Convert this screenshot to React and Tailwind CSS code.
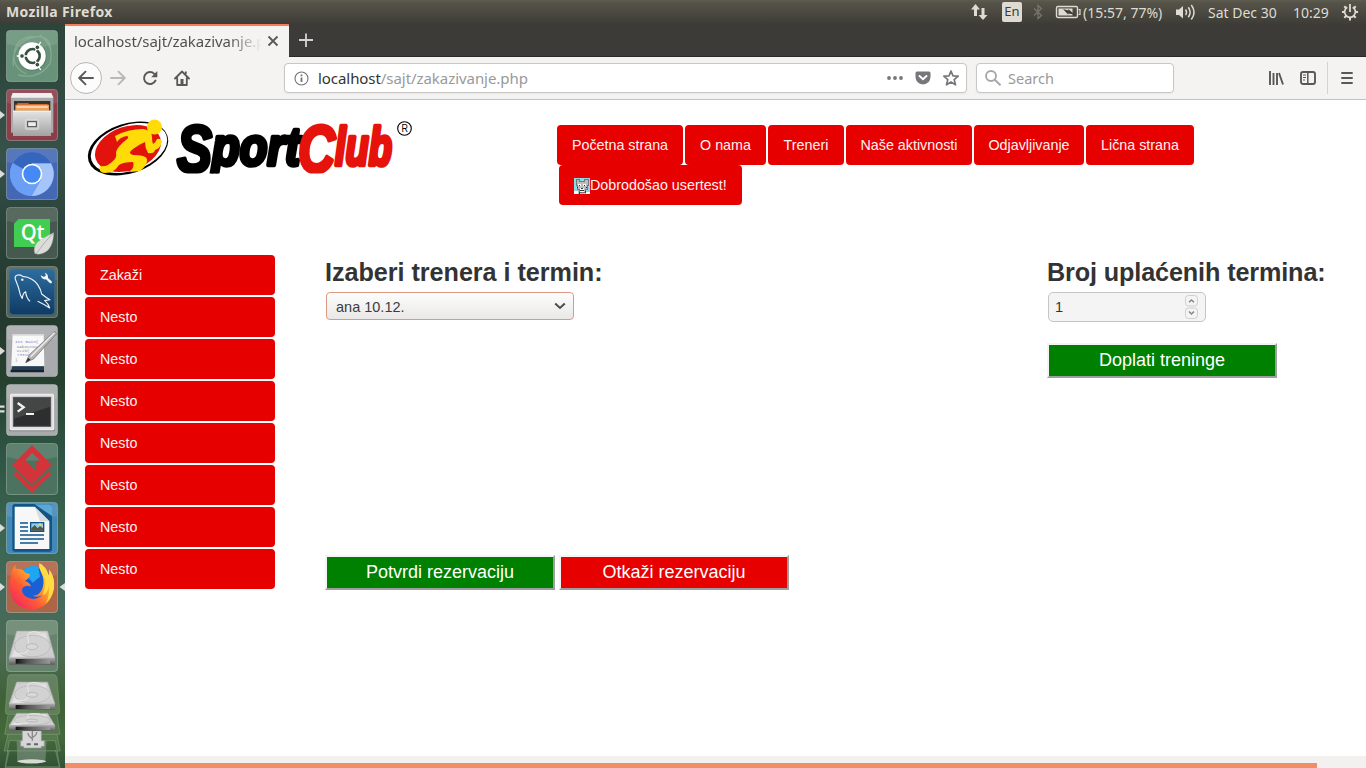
import React from "react";

const UI = "font-['Noto_Sans','Open_Sans',sans-serif]";

function Tile({ box, tone, left, right, children }) {
  const [x, y] = box;
  return (
    <div className="flex h-[52px] w-[65px] items-center">
      <svg className="h-3 w-[6px]" viewBox="0 0 6 12" fill="#dcdcdc">
        {left === "arrow" && <path d="M0 2 L5 6 L0 10Z" />}
        {left === "bars" && <path d="M0 1.500h4.500v2.200H0z M0 6.300h4.500v2.200H0z" />}
      </svg>
      <svg className="h-[52px] w-[52px]" viewBox={`${x} ${y} 156 156`}>
        <rect x={x + 1.5} y={y + 1.5} width="153" height="153" rx="10" fill={tone} stroke="#fff" strokeOpacity=".28" strokeWidth="3" />
        <path d={`M${x + 3} ${y + 12}q0 -9 9 -9h132q9 0 9 9v30q-75 22 -150 0z`} fill="#fff" opacity=".1" />
        {children}
      </svg>
      <svg className="h-3 w-[7px]" viewBox="0 0 7 12" fill="#dcdcdc">
        {right && <path d="M7 2 L1.500 6 L7 10Z" />}
      </svg>
    </div>
  );
}

function Drive({ top, mid, bottom }) {
  const h = mid - top;
  return (
    <g>
      <path d={`M50 ${top}H143L165 ${mid}H27Z`} fill="#cfcfcf" stroke="#a4a4a4" strokeWidth="2" />
      <path d={`M57 ${top + h * 0.06}H136L157 ${mid - h * 0.05}H36Z`} fill="url(#metal)" />
      <ellipse cx="97" cy={top + h * 0.56} rx="54" ry={h * 0.4} fill="#d2d2d2" stroke="#b2b2b2" strokeWidth="2" />
      <path d={`M50 ${top + h * 0.85}Q98 ${top + h * 0.9} 85 ${top + h * 0.4}T120 ${top + h * 0.06}`} fill="none" stroke="#e8e8e8" strokeWidth="3" />
      <ellipse cx="96" cy={top + h * 0.58} rx="17" ry={h * 0.11} fill="#d8d8d8" stroke="#aaa" strokeWidth="2" />
      <path d={`M27 ${mid}H165V${bottom}H27Z`} fill="url(#edge)" />
      <path d={`M47 ${mid + 3}H150V${bottom - 3}H47Z`} fill="url(#slot)" />
    </g>
  );
}

function Launcher() {
  return (
    <aside className="flex w-[65px] shrink-0 flex-col gap-[7px] bg-[linear-gradient(180deg,#2c4439_0%,#37524a_18%,#2b453c_26%,#24382e_38%,#26402f_48%,#2f5544_58%,#3a6550_68%,#456a5c_78%,#4c6b50_85%,#3e6136_91%,#43693a_96%,#315234_100%)] pt-[6px]">
      <svg className="absolute h-0 w-0">
        <defs>
          <linearGradient id="metal" x2="1" y2="1"><stop stopColor="#c4c4c4" /><stop offset=".5" stopColor="#e4e4e4" /><stop offset="1" stopColor="#c8c8c8" /></linearGradient>
          <linearGradient id="edge" x2="0" y2="1"><stop stopColor="#aaa" /><stop offset="1" stopColor="#5c5c5c" /></linearGradient>
          <linearGradient id="slot"><stop stopColor="#111" /><stop offset=".35" stopColor="#555" /><stop offset="1" stopColor="#999" /></linearGradient>
          <linearGradient id="grey" x2="0" y2="1"><stop stopColor="#e4e4e4" /><stop offset="1" stopColor="#a2a2a2" /></linearGradient>
          <linearGradient id="navy" x2="0" y2="1"><stop stopColor="#2d6da0" /><stop offset="1" stopColor="#0f3a63" /></linearGradient>
          <linearGradient id="fox" x1="1" y1="0" x2="0" y2="1"><stop stopColor="#fff44f" /><stop offset=".35" stopColor="#ffb52a" /><stop offset=".62" stopColor="#ff5a36" /><stop offset="1" stopColor="#f5156c" /></linearGradient>
        </defs>
      </svg>

      <Tile box={[18, 90]} tone="#689279">
        <path d="M40 200Q34 130 96 112Q150 100 152 150M55 225Q118 240 150 190Q165 140 120 105M42 160Q50 110 100 110M80 222Q40 205 42 165" fill="none" stroke="#9fbea9" strokeWidth="4" opacity=".5" />
        <circle cx="97" cy="170" r="43" fill="#3f664f" opacity=".3" />
        <circle cx="96" cy="168" r="41" fill="#fff" />
        <circle cx="98" cy="168" r="21" fill="none" stroke="#36523f" strokeWidth="8" />
        <path d="M98 168L122 126M98 168L122 210M98 168H50" stroke="#fff" strokeWidth="4" />
        <g fill="#36523f" stroke="#fff" strokeWidth="3"><circle cx="66" cy="168" r="7" /><circle cx="112" cy="142" r="7" /><circle cx="112" cy="194" r="7" /></g>
      </Tile>

      <Tile box={[18, 267]} tone="#8b3d49" left="arrow">
        <path d="M38 279H154L160 293V398H33V293Z" fill="#a9a9a9" />
        <path d="M38 279H154L160 293H33Z" fill="#f0f0f0" />
        <path d="M42 303H151V332H42Z" fill="#37332f" />
        <path d="M52 309H84L88 312H143V320H52Z" fill="#d25d27" />
        <path d="M46 314H147V332H46Z" fill="#f2a051" />
        <path d="M50 319H143V323H50Z" fill="#fff1dc" />
        <path d="M39 332H153V408H39Z" fill="url(#grey)" />
        <path d="M39 332H153V335H39Z" fill="#f5f5f5" />
        <rect x="76" y="358" width="40" height="30" rx="5" fill="#c9c9c9" stroke="#e5e5e5" strokeWidth="2" />
        <rect x="83" y="365" width="26" height="15" fill="#eee" stroke="#444" strokeWidth="3" />
      </Tile>

      <Tile box={[18, 444]} tone="#4468b4" left="arrow">
        <circle cx="96" cy="522" r="66" fill="#6a9df3" />
        <path d="M96 522L39 489A66 66 0 0 1 153 489H96Z" fill="#3565bd" />
        <path d="M96 491H153A66 66 0 0 1 95 588L124 537Z" fill="#a4c4fa" />
        <path d="M39 489L70 540L96 552L124 537L95 588A66 66 0 0 1 39 489Z" fill="#6b9ff6" />
        <circle cx="96" cy="522" r="31" fill="#fff" />
        <circle cx="96" cy="522" r="26" fill="#4489f4" />
      </Tile>

      <Tile box={[18, 51]} tone="#46594e">
        <path d="M56 87H150V157L136 171H42V101Z" fill="#41cd52" />
        <text x="62" y="151" textLength="72" lengthAdjust="spacingAndGlyphs" fill="#fff" className="font-['Open_Sans',sans-serif] text-[64px] font-semibold">Qt</text>
        <path d="M161 128Q160 178 128 190Q112 196 104 190Q99 172 112 157Q125 145 161 128Z" fill="#dcdcda" stroke="#aaa" />
        <path d="M160 129Q130 160 108 192" fill="none" stroke="#9c9c9c" strokeWidth="2" />
      </Tile>

      <Tile box={[18, 228]} tone="#50635b">
        <rect x="28" y="238" width="136" height="136" rx="12" fill="url(#navy)" stroke="#416c8b" strokeWidth="2" />
        <path d="M67 326L61 314Q57 293 46 268Q43 257 54 255Q60 254 68 259Q98 262 113 284Q123 299 125 312Q137 322 150 329L134 332Q146 342 149 354Q130 342 113 334M67 326Q68 309 77 305Q78 322 90 334" fill="none" stroke="#e9f2f8" strokeWidth="3.500" strokeLinejoin="round" />
        <circle cx="67" cy="269" r="3.500" fill="#fff" />
        <path d="M134 248Q145 251 144 264L155 274Q158 280 150 280L138 268Q125 270 122 256L132 261L138 256Z" fill="#f1f6fa" />
      </Tile>

      <Tile box={[18, 405]} tone="#a9aaad" left="arrow">
        <path d="M37 529H132V546H32Z" fill="#243d57" />
        <path d="M32 540H132V547H32Z" fill="#17212d" />
        <path d="M38 432H131L133 528H34Z" fill="#f8f8f8" />
        <path d="M38 432H131V437H38Z" fill="#d7d7d7" />
        <g className="font-['Liberation_Mono',monospace] text-[13px]" fill="#8d93a8"><text x="45" y="460" fill="#7b78d6">int main(</text><text x="50" y="473">KAboutDat</text><text x="50" y="486">KLib(</text><text x="52" y="499" fill="#7b78d6">return</text><text x="45" y="513">}</text></g>
        <path d="M164 424L170 431L102 506L77 518L88 494Z" fill="#b4b4b4" stroke="#6d6d6d" strokeWidth="2" />
        <path d="M163 428L92 500" stroke="#eee" strokeWidth="4" /><path d="M77 518L84 503L92 509Z" fill="#333" />
      </Tile>

      <Tile box={[18, 12]} tone="#a8aaab" left="bars">
        <rect x="28" y="41" width="136" height="113" rx="3" fill="#777" />
        <rect x="30" y="42" width="132" height="108" rx="3" fill="#e2e2e2" stroke="#fff" strokeWidth="2" />
        <rect x="40" y="52" width="112" height="87" fill="#2d2e2f" stroke="#555" strokeWidth="3" />
        <path d="M42 54H150V80L42 116Z" fill="#545657" opacity=".6" />
        <path d="M53 69L71 82L53 95" fill="none" stroke="#f2f2f2" strokeWidth="7" /><path d="M78 102H102" stroke="#f2f2f2" strokeWidth="6" />
      </Tile>

      <Tile box={[18, 189]} tone="#4c7360">
        <path fillRule="evenodd" d="M96 196L156 255L96 314L36 255ZM97 218L75 241L104 270L118 256L104 248L119 241Z" fill="#d23539" />
        <path d="M118 245L130 257L116 271L104 259Z" fill="#d23539" />
        <path d="M40 282L48 274L96 320L146 274L154 282L96 339Z" fill="#d23539" />
      </Tile>

      <Tile box={[18, 366]} tone="#4388b6" left="arrow">
        <rect x="37" y="372" width="119" height="143" rx="8" fill="#115586" />
        <path d="M104 373H148Q156 373 156 382V408Z" fill="#5da7d2" />
        <path d="M44 380H104L148 424V507H44Z" fill="#f7f7f7" />
        <path d="M104 380L148 424H120Z" fill="#d6dde1" />
        <path d="M60 429H84M60 441H84M60 453H84M60 465H132M60 477H132M60 489H114" stroke="#0d568d" strokeWidth="5" />
        <rect x="92" y="428" width="39" height="26" fill="#92cce5" stroke="#0d568d" strokeWidth="4" />
        <path d="M94 452V445L104 435L113 445L120 438L129 445V452Z" fill="#52564b" /><circle cx="120" cy="434" r="4" fill="#f5cf56" />
      </Tile>

      <Tile box={[18, -27]} tone="#ae6446" left="arrow" right>
        <circle cx="97" cy="48" r="56" fill="#1c5fd4" />
        <path d="M67 2Q88-18 115-10L120 20L98 38Z" fill="#1fa5f2" />
        <path d="M118-20Q116-5 124 9Q135 30 128 53Q120 77 98 77Q113 84 128 75Q101 97 75 78Q62 65 68 53Q80 43 93 50Q90 38 75 33Q91 23 89 12Q74 10 70 1Q58-5 48-3Q44-10 47-16Q32-1 32 20Q27 41 30 57Q37 116 97 118Q151 113 162 57Q166 24 148-1Q150 12 146 17Q139-10 118-20Z" fill="url(#fox)" />
        <path d="M118-20Q116-5 128 11Q143 39 128 75Q144 71 146 45Q151 74 137 101Q163 77 162 39Q160 14 148-1Q150 12 146 17Q139-10 118-20Z" fill="#ffdc46" />
      </Tile>

      <Tile box={[18, 151]} tone="#66846d"><Drive top={184} mid={265} bottom={285} /></Tile>

      <svg className="mt-[-5px] h-[94px] w-[65px]" viewBox="0 312 195 282">
        <path d="M30 314H162Q169 314 171 325L179 424Q179 434 168 434H26Q15 434 16 424L23 325Q24 314 30 314Z" fill="#aec5a5" opacity=".3" stroke="#fff" strokeWidth="2" />
        <path d="M24 436L14 493H180L171 436M24 493L12 543H181L171 493M28 540L17 590H178L166 540M28 512H166L180 594H15Z" fill="#c3d4bd" fillOpacity=".15" stroke="#e3eee3" strokeOpacity=".3" strokeWidth="2" />
        <path d="M50 512H140L136 575Q95 590 52 575Z" fill="#809486" opacity=".6" />
        <ellipse cx="95" cy="574" rx="43" ry="6" fill="#d4dbd5" />
        <path d="M67 482H124V512H133V529H124V534H71V529H62V512H67Z" fill="#d6d6d6" stroke="#999" strokeWidth="2" />
        <path d="M97 512V482M97 506Q84 498 84 489M97 502Q110 496 110 486" fill="none" stroke="#888" strokeWidth="4" /><path d="M80 520H92V526H80zM102 520H114V526H102z" fill="#666" />
        <Drive top={336} mid={402} bottom={420} />
        <Drive top={430} mid={467} bottom={483} />
      </svg>
    </aside>
  );
}

function TopPanel() {
  return (
    <header className="flex h-6 items-center bg-[linear-gradient(#5f5d51_0,#565449_10%,#3d3c37_100%)] text-[#dfdbd2]">
      <span className="w-[120px] pl-[6px] text-[14px] leading-6 font-bold whitespace-nowrap tracking-[0.025em]">Mozilla Firefox</span>
      <div className="ml-auto flex h-6 items-center text-[14px]">
        <svg className="h-6 w-[18px]" viewBox="0 0 18 24" fill="#dfdbd2"><path d="M5.500 4L10 9.400H7V16H4V9.400H1ZM13 20L8.500 15H11.500V8H14.500V15H17.500Z" /></svg>
        <span className="ml-[14px] flex h-5 w-5 items-center justify-center rounded-[2px] bg-[#dfdbd2] text-[13px] text-[#3d3c37]">En</span>
        <svg className="ml-[11px] h-6 w-[10px]" viewBox="0 0 10 24" fill="none" stroke="#77756d" strokeWidth="1.300"><path d="M1 8.500L8.500 15.500L5 18.500V5.500L8.500 8.500L1 15.500" /></svg>
        <svg className="ml-[12px] h-6 w-[26px]" viewBox="0 0 26 24"><rect x="1.500" y="6.500" width="21" height="11" rx="1.500" fill="none" stroke="#dfdbd2" strokeWidth="1.400" /><rect x="3.500" y="8.500" width="14" height="7" fill="#dfdbd2" /><path d="M23.500 9.500H25V14.500H23.500" fill="none" stroke="#dfdbd2" strokeWidth="1.200" /><path d="M8 9L13.500 10.500L13.300 9L19.500 14.500L13 13.500L13.500 15Z" fill="#3d3c37" /></svg>
        <span className="ml-[2px] w-[83px] whitespace-nowrap">(15:57, 77%)</span>
        <svg className="ml-[9px] h-6 w-[22px]" viewBox="0 0 22 24" fill="none" stroke="#dfdbd2" strokeWidth="1.500"><path d="M1 9.500H4L8 6V18.500L4 15H1Z" fill="#dfdbd2" stroke="none" /><path d="M10.500 9.500Q12.500 12.300 10.500 15M13.300 7.300Q17 12.300 13.300 17.200M16.300 5Q21.800 12.300 16.300 19.500" /></svg>
        <span className="ml-[11px] w-[73px] whitespace-nowrap">Sat Dec 30</span>
        <span className="ml-[12px] w-[39px] whitespace-nowrap">10:29</span>
        <svg className="mr-[7px] ml-[9px] h-6 w-[18px]" viewBox="0 0 18 24" fill="none" stroke="#dfdbd2"><path d="M6.300 7.200A5.400 5.400 0 1 0 11.700 7.200" strokeWidth="1.700" /><path d="M9 4V12" strokeWidth="1.800" /><path d="M1 12H4M14 12H17M9 17V20.500M3.300 6.300L5.500 8.500M14.700 6.300L12.500 8.500M3.300 17.700L5.300 15.700M14.700 17.700L12.700 15.700" strokeWidth="2" /></svg>
      </div>
    </header>
  );
}

function Browser() {
  return (
    <>
      <div className="flex h-[33px] border-b border-[#2b2926] bg-[#3c3b37]">
        <div className="mb-[-1px] flex w-[224px] border-t-2 border-[#f37e58] bg-[#f4f3f2] pl-[9px] text-[#4c4c4c]">
          <span className="w-[188px] overflow-hidden bg-[linear-gradient(90deg,#4c4c4c_82%,transparent_100%)] bg-clip-text text-[15px] leading-[30px] tracking-[-0.004em] whitespace-nowrap text-transparent">localhost/sajt/zakazivanje.php</span>
          <svg className="ml-[4px] h-[31px] w-4" viewBox="0 0 16 31" stroke="#58575a" strokeWidth="1.800"><path d="M2.500 10.500L11.500 19.500M11.500 10.500L2.500 19.500" /></svg>
        </div>
        <svg className="ml-[9px] h-8 w-4" viewBox="0 0 16 32" stroke="#d5d4d2" strokeWidth="1.800"><path d="M8 9.500V23M1 16H15" /></svg>
      </div>
      <div className="flex h-[43px] items-center border-b border-[#c5c3c1] bg-[#f4f3f2]">
        <span className="ml-[5px] flex h-8 w-8 items-center justify-center rounded-full border border-[#b9b7b5] bg-[#fcfcfc]">
          <svg className="h-4 w-4" viewBox="0 0 16 16" fill="none" stroke="#58575a" strokeWidth="1.900" strokeLinecap="round" strokeLinejoin="round"><path d="M15 8H1.500M7.500 1.700L1.200 8L7.500 14.300" /></svg>
        </span>
        <svg className="ml-2 h-4 w-4" viewBox="0 0 16 16" fill="none" stroke="#b9b8b7" strokeWidth="1.900" strokeLinecap="round" strokeLinejoin="round"><path d="M1 8H14.500M8.500 1.700L14.800 8L8.500 14.300" /></svg>
        <svg className="ml-4 h-4 w-4" viewBox="0 0 16 16" fill="none" stroke="#58575a" strokeWidth="1.900"><path d="M13.500 10.500A6 6 0 1 1 12.300 3.800" strokeLinecap="round" /><path d="M15.300 1V7.200H9.200Z" fill="#58575a" stroke="none" /></svg>
        <svg className="ml-4 h-4 w-4" viewBox="0 0 16 16" fill="none" stroke="#58575a" strokeWidth="1.800" strokeLinejoin="round"><path d="M1 8.500L8 1.500L15 8.500M3.200 8V15H12.800V8" strokeLinecap="round" /><path d="M6.500 9h3v5h-3z" fill="#58575a" stroke="none" /><path d="M11.800 1.500V4" /></svg>
        <div className="ml-[94px] flex h-[30px] w-[683px] items-center rounded-[4px] border border-[#c9c7c5] bg-white shadow-[0_1px_2px_#0000000d]">
          <svg className="ml-[9px] h-[15px] w-[15px]" viewBox="0 0 15 15" fill="none" stroke="#737373" strokeWidth="1.100"><circle cx="7.500" cy="7.500" r="6.500" /><path d="M7.500 6.500V11M7.500 3.500V5.200" strokeWidth="1.800" /></svg>
          <span className="ml-[9px] text-[15px] leading-[28px] tracking-[-0.004em] whitespace-nowrap text-[#333]">localhost<span className="text-[#999]">/sajt/zakazivanje.php</span></span>
          <svg className="ml-auto h-4 w-[18px]" viewBox="0 0 18 16" fill="#77767a"><circle cx="3" cy="8" r="1.900" /><circle cx="9" cy="8" r="1.900" /><circle cx="15" cy="8" r="1.900" /></svg>
          <svg className="ml-[11px] h-4 w-4" viewBox="0 0 16 16"><path d="M2 1.500H14Q15.500 1.500 15.500 3V7Q15 14 8 14.500Q1 14 .5 7V3Q.5 1.500 2 1.500Z" fill="#77767a" /><path d="M4.500 6L8 9.300L11.500 6" fill="none" stroke="#fff" strokeWidth="1.900" strokeLinecap="round" /></svg>
          <svg className="mr-[7px] ml-3 h-4 w-4" viewBox="0 0 16 16" fill="none" stroke="#77767a" strokeWidth="1.700" strokeLinejoin="round"><path d="M8 1L10 5.800L15.200 6.200L11.200 9.600L12.500 14.800L8 12L3.500 14.800L4.800 9.600L.8 6.200L6 5.800Z" /></svg>
        </div>
        <div className="ml-[9px] flex h-[30px] w-[198px] items-center rounded-[4px] border border-[#c9c7c5] bg-white shadow-[0_1px_2px_#0000000d]">
          <svg className="ml-2 h-4 w-4" viewBox="0 0 16 16" fill="none" stroke="#a7a6a8" strokeWidth="1.900"><circle cx="6" cy="6" r="5" /><path d="M9.700 9.700L15.500 15.200" /></svg>
          <span className="ml-[7px] text-[14.500px] leading-[28px] text-[#999]">Search</span>
        </div>
        <svg className="ml-auto h-4 w-4" viewBox="0 0 16 16" stroke="#58575a" strokeWidth="1.900"><path d="M2 1V15M5.500 3V15M9 3V15M11 3L15 14.500" /></svg>
        <svg className="ml-4 h-4 w-4" viewBox="0 0 16 16" fill="none" stroke="#58575a" strokeWidth="1.900"><rect x="1" y="2" width="14" height="12" rx="2" /><path d="M7.800 2V14" strokeWidth="1.500" /><path d="M3 5H6M3 7.500H6M3 10H5" strokeWidth="1" /></svg>
        <span className="ml-[11px] h-8 w-px bg-[#d5d3d2]" />
        <svg className="mr-[11px] ml-[11px] h-4 w-4" viewBox="0 0 16 16" stroke="#58575a" strokeWidth="1.900" strokeLinecap="round"><path d="M3 3H13M3 8H13M3 13H13" /></svg>
      </div>
    </>
  );
}

function Logo() {
  return (
    <svg className="h-[80px] w-[350px]" viewBox="0 0 350 80">
      <defs><clipPath id="word"><path d="M90 5H318V63.500H90Z" /></clipPath></defs>
      <ellipse cx="48" cy="38.500" rx="41.500" ry="25" transform="rotate(-18 48 38.500)" fill="#000" />
      <ellipse cx="49" cy="38" rx="39.500" ry="23" transform="rotate(-18 49 38)" fill="#fff" />
      <ellipse cx="48" cy="38.500" rx="34" ry="22" transform="rotate(-18 48 38.500)" fill="#e2130d" />
      <path d="M35 26Q48 19 63 19Q72 20 72 27Q72 32 73 34Q76 32 77 29Q81 28 82 31Q81 38 75 40Q74 44 68 43Q65 38 65 32Q60 34 53 39Q47 43 53 45Q66 45 67 49Q68 55 60 61L50 62Q55 56 53 52Q43 52 39 55Q34 63 25 63Q18 63 20 56Q27 58 35 49Q37 46 36 42Q38 36 46 30Q50 27 47 26Q40 27 37 32Z" fill="#ffdc08" />
      <circle cx="74.500" cy="17" r="7.600" fill="#ffdc08" />
      <g className="font-['Liberation_Sans',sans-serif] font-bold italic" strokeLinejoin="round" clipPath="url(#word)">
        <g fill="#000" stroke="#000">
          <text x="97" y="61.500" fontSize="67" textLength="35" lengthAdjust="spacingAndGlyphs" strokeWidth="4">S</text>
          <text x="132" y="55" fontSize="54" textLength="88" lengthAdjust="spacingAndGlyphs" strokeWidth="4.500">port</text>
        </g>
        <g fill="#e6130c" stroke="#e6130c">
          <text x="218" y="61.500" fontSize="67" textLength="37" lengthAdjust="spacingAndGlyphs" strokeWidth="4">C</text>
          <text x="255" y="55" fontSize="53" textLength="57" lengthAdjust="spacingAndGlyphs" strokeWidth="4.500">lub</text>
        </g>
      </g>
      <circle cx="324.500" cy="18.500" r="6.800" fill="none" stroke="#000" strokeWidth="1.100" />
      <text x="321.500" y="22.300" className="font-['Liberation_Sans',sans-serif] text-[10px]" textLength="6.500" lengthAdjust="spacingAndGlyphs">R</text>
    </svg>
  );
}

function Avatar() {
  return (
    <svg className="h-4 w-4 shrink-0" viewBox="0 0 16 16" shapeRendering="crispEdges">
      <path d="M0 0H16V16H0Z" fill="#8ed8e4" />
      <path d="M0 13H4V16H0ZM12 14H16V16H12Z" fill="#fff" />
      <path d="M2 1L6 3H10L14 1V8L12 13L9 16H6L3 12Z" fill="#bdbdbd" />
      <path d="M2 1H5V3H10V1H14V7H13V11H11V14H5V11H3V7H2Z" fill="none" stroke="#777" />
      <path d="M4 6h3v2H4zM9 6h3v2H9zM6 10h4v4H6z" fill="#f4f4f4" /><path d="M5 7h1v1H5zM10 7h1v1h-1zM7 10h2v1H7zM6 12h4v1H6zM3 9h1v1H3zM12 9h1v1h-1zM5 14h1v2H5zM11 13h1v2h-1z" fill="#333" />
    </svg>
  );
}

const nav = [
  ["Početna strana", "w-[126px]"],
  ["O nama", "w-[81px]"],
  ["Treneri", "w-[76px]"],
  ["Naše aktivnosti", "w-[126px]"],
  ["Odjavljivanje", "w-[110px]"],
  ["Lična strana", "w-[108px]"],
];

function ActionButton({ tone, children }) {
  return (
    <button className={`h-[35px] w-[230px] border-2 border-t-[#f4f4f4] border-r-[#9e9e9e] border-b-[#9e9e9e] border-l-[#f4f4f4] pb-[2px] text-[18px] leading-none text-white ${tone}`}>{children}</button>
  );
}

function Page() {
  return (
    <div className="flex h-[656px] flex-col bg-white font-['Liberation_Sans',sans-serif] text-[14.300px]">
      <div className="flex h-[155px] shrink-0 pl-[15px]">
        <div className="pt-[10px]"><Logo /></div>
        <nav className="ml-[127px] pt-[25px] text-[#fff4f4]">
          <div className="flex gap-[2px]">
            {nav.map(([label, width]) => (
              <a key={label} className={`flex h-10 items-center justify-center rounded-[4px] bg-[#e60000] pt-[2px] whitespace-nowrap ${width}`}>{label}</a>
            ))}
          </div>
          <a className="ml-[2px] flex h-10 w-[183px] items-center rounded-[4px] bg-[#e60000] pt-[2px] pl-[15px] whitespace-nowrap"><Avatar />Dobrodošao usertest!</a>
        </nav>
      </div>
      <div className="flex pl-5">
        <ul className="flex w-[190px] flex-col gap-[2px] text-[#fff4f4]">
          {["Zakaži", "Nesto", "Nesto", "Nesto", "Nesto", "Nesto", "Nesto", "Nesto"].map((label, i) => (
            <li key={i} className="flex h-10 items-center rounded-[4px] bg-[#e60000] pt-[2px] pl-[15px]">{label}</li>
          ))}
        </ul>
        <section className="ml-[50px] flex w-[722px] flex-col">
          <h2 className="h-[37px] pt-[3px] text-[25.200px] leading-[29px] font-bold tracking-[-0.040px] text-[#333]">Izaberi trenera i termin:</h2>
          <div className="ml-[1px] flex h-[28px] w-[248px] items-center rounded-[4px] border border-[#dd9a82] bg-[linear-gradient(#fdfdfd,#e9e8e7)] pl-[9px] text-[14.500px] text-[#3c3c3c]">
            <span className="pt-[3px]">ana 10.12.</span>
            <svg className="mr-[7px] ml-auto h-3 w-3" viewBox="0 0 12 12" fill="none" stroke="#4c4c4c" strokeWidth="2"><path d="M1.200 3.500L6 8L10.800 3.500" /></svg>
          </div>
          <div className="mt-[235px] flex gap-[4px]">
            <ActionButton tone="bg-[#008000]">Potvrdi rezervaciju</ActionButton>
            <ActionButton tone="bg-[#e60000]">Otkaži rezervaciju</ActionButton>
          </div>
        </section>
        <section className="flex flex-col">
          <h2 className="h-[37px] pt-[3px] text-[25.200px] leading-[29px] font-bold tracking-[-0.120px] whitespace-nowrap text-[#333]">Broj uplaćenih termina:</h2>
          <div className="ml-[1px] flex h-[30px] w-[158px] items-center rounded-[5px] border border-[#c6c5c4] bg-[#f4f4f4] pl-[6px] text-[14.600px] text-[#333]">
            <span className="pt-[1px]">1</span>
            <svg className="mr-[7px] ml-auto h-[26px] w-[13px]" viewBox="0 0 13 26" fill="none"><g stroke="#cfcfcf"><rect x=".5" y="1.500" width="12" height="10.500" rx="3" /><rect x=".5" y="14" width="12" height="10.500" rx="3" /></g><path d="M4 8.300L6.500 6L9 8.300M4 17.500L6.500 20L9 17.500" stroke="#858585" strokeWidth="1.500" /></svg>
          </div>
          <div className="mt-[21px]"><ActionButton tone="bg-[#008000]">Doplati treninge</ActionButton></div>
        </section>
      </div>
    </div>
  );
}

export default function App() {
  return (
    <div className={`flex h-[768px] w-[1366px] flex-col overflow-hidden ${UI}`}>
      <TopPanel />
      <div className="flex h-[744px]">
        <Launcher />
        <main className="flex w-[1301px] flex-col">
          <Browser />
          <Page />
          <div className="flex h-3 items-end bg-[#f2f1ef]"><div className="h-[5px] w-[1252px] bg-[#f18e68]" /></div>
        </main>
      </div>
    </div>
  );
}
